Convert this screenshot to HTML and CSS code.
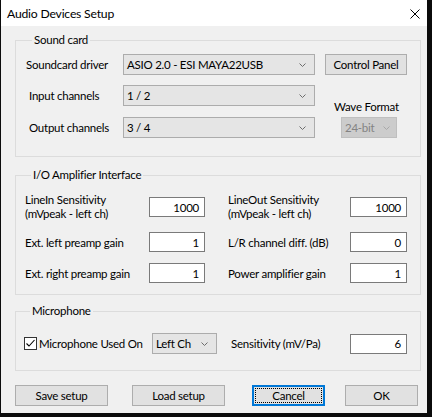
FILE: index.html
```html
<!DOCTYPE html>
<html>
<head>
<meta charset="utf-8">
<link rel="stylesheet" href="styles.css">
</head>
<body>
<div class="window">
  <div class="titlebar">
    <span class="title">Audio Devices Setup</span>
    <svg class="close" width="10" height="10" viewBox="0 0 10 10"><path d="M0.5 0.5 L9.5 9.5 M9.5 0.5 L0.5 9.5" stroke="#000" stroke-width="1" fill="none"/></svg>
  </div>
  <div class="content">
    <fieldset class="group g-sound">
      <legend>Sound card</legend>
      <div class="sound-grid">
        <span class="lbl">Soundcard driver</span>
        <div class="combo c-driver"><span class="ctext">ASIO 2.0 - ESI MAYA22USB</span><svg class="chev" width="7" height="4" viewBox="0 0 7 4"><path d="M0.5 0.5 L3.5 3.5 L6.5 0.5" stroke="#6d6d6d" fill="none"/></svg></div>
        <div class="btn b-cp">Control Panel</div>
        <span class="lbl ind r2">Input channels</span>
        <div class="combo r2"><span class="ctext">1 / 2</span><svg class="chev" width="7" height="4" viewBox="0 0 7 4"><path d="M0.5 0.5 L3.5 3.5 L6.5 0.5" stroke="#6d6d6d" fill="none"/></svg></div>
        <div class="wave">
          <span class="wave-lbl">Wave Format</span>
          <div class="combo disabled"><span class="ctext">24-bit</span><svg class="chev" width="7" height="4" viewBox="0 0 7 4"><path d="M0.5 0.5 L3.5 3.5 L6.5 0.5" stroke="#a8a8a8" fill="none"/></svg></div>
        </div>
        <span class="lbl ind">Output channels</span>
        <div class="combo"><span class="ctext">3 / 4</span><svg class="chev" width="7" height="4" viewBox="0 0 7 4"><path d="M0.5 0.5 L3.5 3.5 L6.5 0.5" stroke="#6d6d6d" fill="none"/></svg></div>
      </div>
    </fieldset>

    <fieldset class="group g-io">
      <legend>I/O Amplifier Interface</legend>
      <div class="io-grid">
        <span class="lbl two">LineIn Sensitivity<br>(mVpeak - left ch)</span>
        <div class="tbox">1000</div>
        <span class="lbl two">LineOut Sensitivity<br>(mVpeak - left ch)</span>
        <div class="tbox">1000</div>
        <span class="lbl">Ext. left preamp gain</span>
        <div class="tbox">1</div>
        <span class="lbl">L/R channel diff. (dB)</span>
        <div class="tbox">0</div>
        <span class="lbl">Ext. right preamp gain</span>
        <div class="tbox">1</div>
        <span class="lbl">Power amplifier gain</span>
        <div class="tbox">1</div>
      </div>
    </fieldset>

    <fieldset class="group g-mic">
      <legend>Microphone</legend>
      <div class="mic-row">
        <div class="chk-wrap">
          <span class="chk"><svg width="11" height="11" viewBox="0 0 11 11"><path d="M1.5 5.5 L4 8 L9.5 2" stroke="#000" stroke-width="1.1" fill="none"/></svg></span>
          <span class="chk-lbl">Microphone Used On</span>
        </div>
        <div class="combo c-ch"><span class="ctext">Left Ch</span><svg class="chev" width="7" height="4" viewBox="0 0 7 4"><path d="M0.5 0.5 L3.5 3.5 L6.5 0.5" stroke="#6d6d6d" fill="none"/></svg></div>
        <span class="lbl sens">Sensitivity (mV/Pa)</span>
        <div class="tbox">6</div>
      </div>
    </fieldset>

    <div class="buttons">
      <div class="btn b-save">Save setup</div>
      <div class="btn b-load">Load setup</div>
      <div class="btn b-cancel"><span class="focus">Cancel</span></div>
      <div class="btn b-ok">OK</div>
    </div>
  </div>
</div>
</body>
</html>
```

FILE: styles.css
```css
html, body {
  margin: 0;
  padding: 0;
}
body {
  background: #0b0b0b;
  width: 432px;
  height: 417px;
  overflow: hidden;
  font-family: "Lato", "Noto Sans", sans-serif;
  font-size: 11.5px;
  letter-spacing: -0.25px;
  color: #000;
}
.window {
  margin-left: 1px;
  width: 426px;
  height: 413px;
  background: #f0f0f0;
  display: flex;
  flex-direction: column;
}
.titlebar {
  height: 26px;
  background: #ffffff;
  display: flex;
  align-items: center;
  justify-content: space-between;
  padding: 0 7px 0 6px;
  flex: none;
}
.title {
  font-size: 12.2px;
  letter-spacing: -0.2px;
}
.close {
  display: block;
  margin-top: 1px;
}
.content {
  padding: 0 6px 0 14px;
}
.group {
  margin: 0;
  border: 1px solid #dcdcdc;
  padding: 0;
  min-width: 0;
}
.group legend {
  margin-left: 6px;
  padding: 0 2px;
  line-height: 16px;
  height: 16px;
}
.g-sound {
  margin-top: 6px;
  padding: 6px 0 18px 10px;
}
.g-io {
  margin-top: 10px;
  padding: 10px 0 11px 9px;
}
.g-mic {
  margin-top: 8px;
  padding: 14px 0 16px 8px;
}
.lbl {
  display: flex;
  align-items: center;
  white-space: nowrap;
}
.lbl.ind {
  padding-left: 3px;
}
.lbl.two {
  line-height: 14px;
}
.sound-grid {
  display: grid;
  grid-template-columns: 97px 192px 1fr;
  grid-template-rows: 21px 22px 21px;
  row-gap: 10px;
}
.sound-grid .r2 {
  align-self: start;
  height: 21px;
}
.combo {
  box-sizing: border-box;
  height: 21px;
  border: 1px solid #acacac;
  background: #e5e5e5;
  display: flex;
  align-items: center;
  justify-content: space-between;
  padding: 0 8px 0 3px;
  white-space: nowrap;
}
.combo .chev {
  display: block;
  flex: none;
}
.combo.disabled {
  background: #cccccc;
  border-color: #bfbfbf;
  color: #838383;
  width: 56px;
  height: 21px;
  padding: 0 6px 0 3px;
}
.btn {
  box-sizing: border-box;
  height: 21px;
  border: 1px solid #adadad;
  background: #e1e1e1;
  display: flex;
  align-items: center;
  justify-content: center;
  white-space: nowrap;
}
.b-cp {
  width: 82px;
  margin-left: 10px;
  align-self: end;
}
.wave {
  grid-column: 3;
  grid-row: 2 / 4;
  display: flex;
  flex-direction: column;
  justify-content: flex-end;
  align-items: flex-start;
  padding-left: 26px;
}
.wave-lbl {
  line-height: 16px;
  margin: 0 0 2px -7px;
  white-space: nowrap;
}
.io-grid {
  display: grid;
  grid-template-columns: 124px 56px 23px 122px 57px;
  grid-template-rows: 28px 20px 20px;
  row-gap: 11px;
}
.io-grid .lbl:nth-child(3),
.io-grid .lbl:nth-child(7),
.io-grid .lbl:nth-child(11) {
  grid-column: 4;
}
.tbox {
  box-sizing: border-box;
  height: 20px;
  border: 1px solid #7a7a7a;
  background: #fff;
  display: flex;
  align-items: center;
  justify-content: flex-end;
  padding-right: 5px;
  align-self: center;
}
.mic-row {
  display: flex;
  align-items: center;
  height: 21px;
}
.chk-wrap {
  width: 128px;
  display: flex;
  align-items: center;
  white-space: nowrap;
}
.chk {
  box-sizing: border-box;
  width: 13px;
  height: 13px;
  border: 1px solid #333;
  background: #fff;
  display: flex;
  align-items: center;
  justify-content: center;
  margin-right: 2px;
  flex: none;
}
.chk svg {
  display: block;
}
.c-ch {
  width: 65px;
}
.sens {
  margin-left: 14px;
  width: 119px;
}
.mic-row .tbox {
  width: 57px;
}
.buttons {
  display: flex;
  margin-top: 14px;
}
.b-save { width: 93px; }
.b-load { width: 93px; margin-left: 24px; }
.b-cancel {
  width: 73px;
  margin-left: 27px;
  border: 2px solid #0078d7;
  padding: 1px;
}
.b-cancel .focus {
  flex: 1;
  align-self: stretch;
  display: flex;
  align-items: center;
  justify-content: center;
  outline: 1px dotted #000;
  outline-offset: -1px;
}
.b-ok { width: 73px; margin-left: 20px; }
```
